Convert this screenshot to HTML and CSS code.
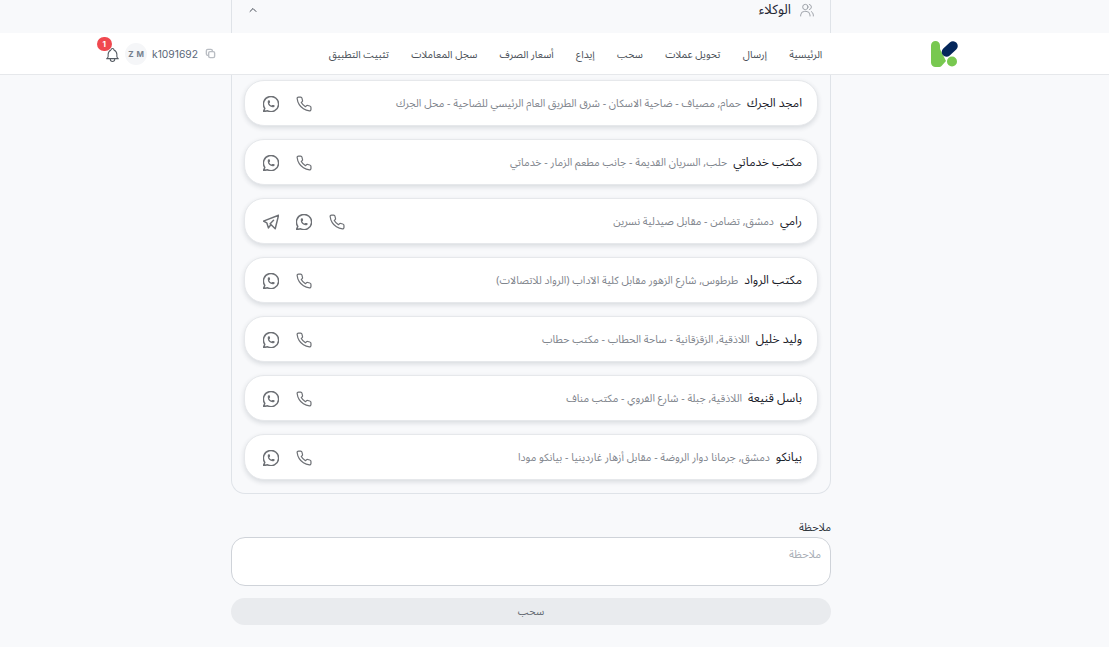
FILE: index.html
```html
<!DOCTYPE html>
<html lang="ar" dir="rtl">
<head>
<meta charset="utf-8">
<title>سحب</title>
<link rel="stylesheet" href="styles.css">
</head>
<body>
<svg class="sprite" aria-hidden="true">
  <symbol id="i-phone" viewBox="0.500 0.500 23 23"><path d="M22 16.920v3a2 2 0 0 1-2.180 2 19.790 19.790 0 0 1-8.630-3.070 19.500 19.500 0 0 1-6-6 19.790 19.790 0 0 1-3.070-8.670A2 2 0 0 1 4.110 2h3a2 2 0 0 1 2 1.720 12.840 12.840 0 0 0 .7 2.810 2 2 0 0 1-.45 2.110L8.090 9.910a16 16 0 0 0 6 6l1.270-1.270a2 2 0 0 1 2.110-.45 12.840 12.840 0 0 0 2.810.7A2 2 0 0 1 22 16.920z"/></symbol>
  <symbol id="i-wa" viewBox="2.500 2.500 19 19"><path d="M3 21l1.650-3.800a9 9 0 1 1 3.400 2.900l-5.050.9"/><path d="M9 10a.5.5 0 0 0 1 0v-1a.5.5 0 0 0-1 0v1a5 5 0 0 0 5 5h1a.5.5 0 0 0 0-1h-1a.5.5 0 0 0 0 1"/></symbol>
  <symbol id="i-tg" viewBox="2.500 2.500 19 19"><path d="M15 10l-4 4l6 6l4-16l-18 7l4 2l2 6l3-4"/></symbol>
</svg>

<div class="panel-top">
  <div class="acc-title">
    <svg class="acc-users" viewBox="0 0 24 24"><circle cx="9.500" cy="7.500" r="4"/><path d="M2.500 21v-1.500a6 6 0 0 1 6-5.500h2a6 6 0 0 1 6 5.500V21"/><path d="M15.500 3.600a4 4 0 0 1 0 7.800"/><path d="M18.500 14.300a6 6 0 0 1 3 5.200V21"/></svg>
    <span>الوكلاء</span>
  </div>
  <svg class="acc-chev" viewBox="0 0 24 24"><path d="M6 15l6-6l6 6"/></svg>
</div>

<header class="topbar">
  <svg class="logo" viewBox="0 0 28 28">
    <path class="logo-g" d="M1 5.500a4.500 4.500 0 0 1 9 0V9l6 12l-4.500 5a3 3 0 0 1-2.300 1H5.500A4.500 4.500 0 0 1 1 22.500z"/>
    <line class="logo-n" x1="23" y1="6" x2="16.500" y2="12"/>
    <circle class="logo-g" cx="22" cy="21.500" r="5"/>
  </svg>
  <nav class="nav">
    <a>الرئيسية</a><a>إرسال</a><a>تحويل عملات</a><a>سحب</a><a>إيداع</a><a>أسعار الصرف</a><a>سجل المعاملات</a><a>تثبيت التطبيق</a>
  </nav>
  <div class="user">
    <svg class="copy" viewBox="0 0 24 24"><rect x="8" y="8" width="13" height="13" rx="3"/><path d="M16 8V6a3 3 0 0 0-3-3H6a3 3 0 0 0-3 3v7a3 3 0 0 0 3 3h2"/></svg>
    <span class="uid" dir="ltr">k1091692</span>
    <span class="avatar" dir="ltr">Z M</span>
    <span class="bell">
      <svg viewBox="2 1 20 22"><path d="M10 5a2 2 0 1 1 4 0a7 7 0 0 1 4 6v3a4 4 0 0 0 2 3h-16a4 4 0 0 0 2-3v-3a7 7 0 0 1 4-6"/><path d="M9 17v1a3 3 0 0 0 6 0v-1"/></svg>
      <span class="badge">1</span>
    </span>
  </div>
</header>

<main class="page">
  <section class="panel-body">
    <article class="card">
      <div class="info"><b>امجد الجرك</b><span>حمام, مصياف - ضاحية الاسكان - شرق الطريق العام الرئيسي للضاحية - محل الجرك</span></div>
      <div class="actions"><svg class="ico"><use href="#i-phone"/></svg><svg class="ico"><use href="#i-wa"/></svg></div>
    </article>
    <article class="card">
      <div class="info"><b>مكتب خدماتي</b><span>حلب, السريان القديمة - جانب مطعم الزمار - خدماتي</span></div>
      <div class="actions"><svg class="ico"><use href="#i-phone"/></svg><svg class="ico"><use href="#i-wa"/></svg></div>
    </article>
    <article class="card">
      <div class="info"><b>رامي</b><span>دمشق, تضامن - مقابل صيدلية نسرين</span></div>
      <div class="actions"><svg class="ico"><use href="#i-phone"/></svg><svg class="ico"><use href="#i-wa"/></svg><svg class="ico"><use href="#i-tg"/></svg></div>
    </article>
    <article class="card">
      <div class="info"><b>مكتب الرواد</b><span>طرطوس, شارع الزهور مقابل كلية الآداب (الرواد للاتصالات)</span></div>
      <div class="actions"><svg class="ico"><use href="#i-phone"/></svg><svg class="ico"><use href="#i-wa"/></svg></div>
    </article>
    <article class="card">
      <div class="info"><b>وليد خليل</b><span>اللاذقية, الزقزقانية - ساحة الحطاب - مكتب حطاب</span></div>
      <div class="actions"><svg class="ico"><use href="#i-phone"/></svg><svg class="ico"><use href="#i-wa"/></svg></div>
    </article>
    <article class="card">
      <div class="info"><b>باسل قنيعة</b><span>اللاذقية, جبلة - شارع الفروي - مكتب مناف</span></div>
      <div class="actions"><svg class="ico"><use href="#i-phone"/></svg><svg class="ico"><use href="#i-wa"/></svg></div>
    </article>
    <article class="card">
      <div class="info"><b>بيانكو</b><span>دمشق, جرمانا دوار الروضة - مقابل أزهار غاردينيا - بيانكو مودا</span></div>
      <div class="actions"><svg class="ico"><use href="#i-phone"/></svg><svg class="ico"><use href="#i-wa"/></svg></div>
    </article>
  </section>

  <form class="note">
    <label class="note-label" for="note">ملاحظة</label>
    <textarea class="note-input" id="note" placeholder="ملاحظة"></textarea>
    <button class="submit" type="button">سحب</button>
  </form>
</main>
</body>
</html>
```
FILE: styles.css
```css
* { box-sizing: border-box; }
html, body { margin: 0; height: 100%; overflow: hidden; }
body {
  background: #f8f9fb;
  font-family: "Noto Sans Arabic", "Noto Sans", "DejaVu Sans", sans-serif;
  color: #1f2733;
}
.sprite { display: none; }

.panel-top {
  width: 600px;
  height: 33px;
  margin-right: 278px;
  padding: 0 15px 13px 15px;
  border-inline: 1px solid #dfe3e8;
  display: flex;
  align-items: center;
  justify-content: space-between;
}
.acc-title { display: flex; align-items: center; gap: 8px; font-size: 13.500px; line-height: 20px; color: #1f2733; }
.acc-users { width: 16px; height: 16px; fill: none; stroke: #8b9098; stroke-width: 1.200; stroke-linecap: round; }
.acc-chev { width: 12px; height: 12px; fill: none; stroke: #444b55; stroke-width: 2; stroke-linecap: round; stroke-linejoin: round; }

.topbar {
  height: 42px;
  background: #fff;
  border-bottom: 1px solid #e6e8eb;
  padding: 0 151px 0 105px;
  display: flex;
  align-items: center;
  justify-content: space-between;
}
.logo { width: 28px; height: 28px; flex: none; }
.logo-g { fill: #78c850; }
.logo-n { stroke: #04265a; stroke-width: 9.500; stroke-linecap: round; }
.nav { display: flex; gap: 22.300px; font-size: 10.300px; color: #4a5058; margin-left: 5px; padding-top: 2px; }
.nav a { white-space: nowrap; }
.user { display: flex; align-items: center; gap: 5px; }
.copy { width: 11px; height: 11px; fill: none; stroke: #b9bdc3; stroke-width: 3; margin-left: 2px; }
.uid { font-family: Inter, "Liberation Sans", sans-serif; font-size: 10.300px; color: #5a6778; }
.avatar {
  width: 22px; height: 22px; border-radius: 50%;
  background: #f5f6f8; color: #76808d;
  font: 700 8px Inter, "Liberation Sans", sans-serif;
  word-spacing: 1px;
  display: flex; align-items: center; justify-content: center;
}
.bell { position: relative; width: 15px; height: 16px; display: block; margin-top: 2px; }
.bell svg { width: 15px; height: 16px; fill: none; stroke: #555b63; stroke-width: 1.500; stroke-linejoin: round; display: block; }
.badge {
  position: absolute; top: -10px; left: -8px;
  width: 14.500px; height: 14.500px; border-radius: 50%;
  background: #f0484f; color: #fff;
  font: 700 8px/14.500px Inter, "Liberation Sans", sans-serif;
  text-align: center;
}

.page { width: 600px; margin-right: 278px; }
.panel-body {
  border: 1px solid #dfe3e8;
  border-top: 0;
  border-radius: 0 0 14px 14px;
  padding: 5px 12px 13px;
  display: flex;
  flex-direction: column;
  gap: 13px;
}
.card {
  height: 46px;
  background: #fff;
  border: 1px solid #e6e8eb;
  border-radius: 20px;
  box-shadow: 0 2px 5px rgba(30, 40, 60, .14);
  padding: 0 15px 0 18px;
  display: flex;
  align-items: center;
  justify-content: space-between;
}
.info { display: flex; align-items: center; gap: 6px; min-width: 0; }
.info b { font-weight: 400; font-size: 12px; color: #1a2029; white-space: nowrap; }
.info span { font-size: 10.650px; color: #7f858d; white-space: nowrap; }
.actions { display: flex; gap: 17px; padding-top: 1px; }
.ico { width: 16px; height: 16px; fill: none; stroke: #6d7075; stroke-width: 1.750; stroke-linecap: round; stroke-linejoin: round; }

.note { display: flex; flex-direction: column; padding-top: 27px; }
.note-label { font-size: 11px; color: #30363e; line-height: 16px; height: 16px; margin-top: -1px; margin-bottom: 1px; }
.note-input {
  height: 49px;
  background: #fff;
  border: 1px solid #cfd3d9;
  border-radius: 14px;
  padding: 5px 9px;
  font: 11px "Noto Sans Arabic", "Noto Sans", "DejaVu Sans", sans-serif;
  resize: none;
  outline: 0;
}
.note-input::placeholder { color: #a9aeb6; }
.submit {
  height: 27px;
  margin-top: 12px;
  padding-top: 2px;
  background: #e9ebee;
  border: 0;
  border-radius: 14px;
  font: 10.500px "Noto Sans Arabic", "Noto Sans", "DejaVu Sans", sans-serif;
  color: #666c74;
}
```
